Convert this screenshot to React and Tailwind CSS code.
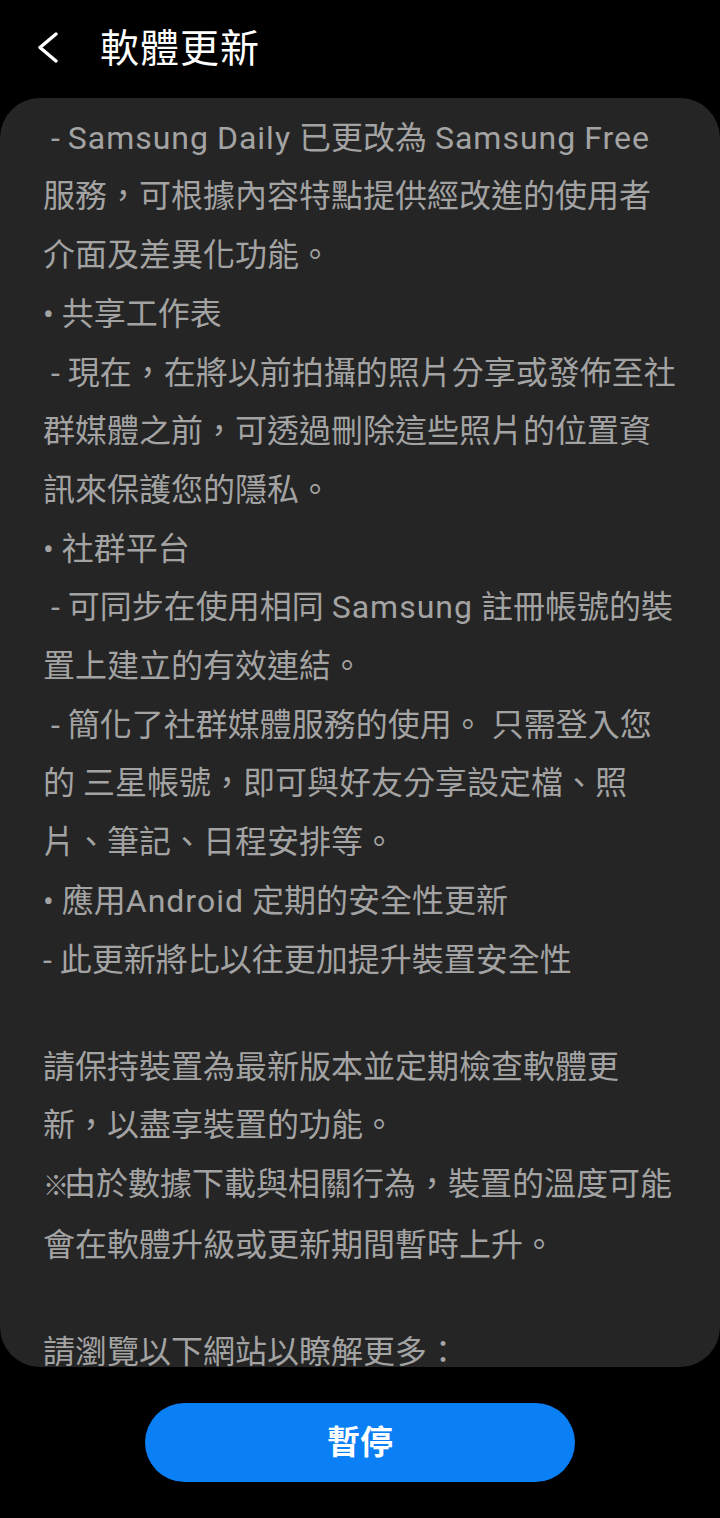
import React from 'react';

const font = { fontFamily: 'Roboto, "Noto Sans CJK TC", sans-serif' };

const lines = [
  '• Samsung Free',
  ' - Samsung Daily 已更改為 Samsung Free',
  '服務，可根據內容特點提供經改進的使用者',
  '介面及差異化功能。',
  '• 共享工作表',
  ' - 現在，在將以前拍攝的照片分享或發佈至社',
  '群媒體之前，可透過刪除這些照片的位置資',
  '訊來保護您的隱私。',
  '• 社群平台',
  ' - 可同步在使用相同 Samsung 註冊帳號的裝',
  '置上建立的有效連結。',
  ' - 簡化了社群媒體服務的使用。 只需登入您',
  '的 三星帳號，即可與好友分享設定檔、照',
  '片、筆記、日程安排等。',
  '• 應用Android 定期的安全性更新',
  '- 此更新將比以往更加提升裝置安全性',
  null,
  '請保持裝置為最新版本並定期檢查軟體更',
  '新，以盡享裝置的功能。',
  '※由於數據下載與相關行為，裝置的溫度可能',
  '會在軟體升級或更新期間暫時上升。',
  null,
  '請瀏覽以下網站以瞭解更多：',
  'https://doc.samsungmobile.com',
];

// Latin words run a bit wider than Roboto, ※ is narrow in the device font
const renderLine = (text) =>
  text.split(/([A-Za-z]+|※)/).map((part, i) => {
    if (part === '※') return <span key={i} className="text-[26px] tracking-[-5px]">※</span>;
    if (/^[A-Za-z]+$/.test(part)) return <span key={i} className="tracking-[1px]">{part}</span>;
    return part;
  });

export default function App() {
  return (
    <div className="w-[720px] h-[1518px] bg-black flex flex-col overflow-hidden" style={font}>
      {/* header */}
      <div className="h-[98px] flex items-center shrink-0">
        <button className="w-[100px] h-full flex items-center pl-[36px]">
          <svg width="26" height="34" viewBox="0 0 26 34" fill="none">
            <path d="M20 2 L4 15.5 L20 29" stroke="white" strokeWidth="3.4" strokeLinecap="round" strokeLinejoin="round" />
          </svg>
        </button>
        <h1 className="text-white text-[39px] leading-none tracking-[1px]">軟體更新</h1>
      </div>

      {/* release notes */}
      <div className="h-[1269px] shrink-0 bg-[#252525] rounded-[40px] overflow-hidden px-[43px]">
        <div className="mt-[-48px] text-[#a3a3a3] text-[32px] leading-[58.7px]">
          {lines.map((l, i) =>
            l === null ? (
              <div key={i} className="h-[48.3px]" />
            ) : (
              <div key={i} className="whitespace-pre">{renderLine(l)}</div>
            )
          )}
        </div>
      </div>

      {/* action */}
      <div className="flex justify-center pt-[36px]">
        <button className="w-[430px] h-[79px] rounded-full bg-[#0a7ff6] text-white text-[33px] font-bold leading-none">
          暫停
        </button>
      </div>
    </div>
  );
}
